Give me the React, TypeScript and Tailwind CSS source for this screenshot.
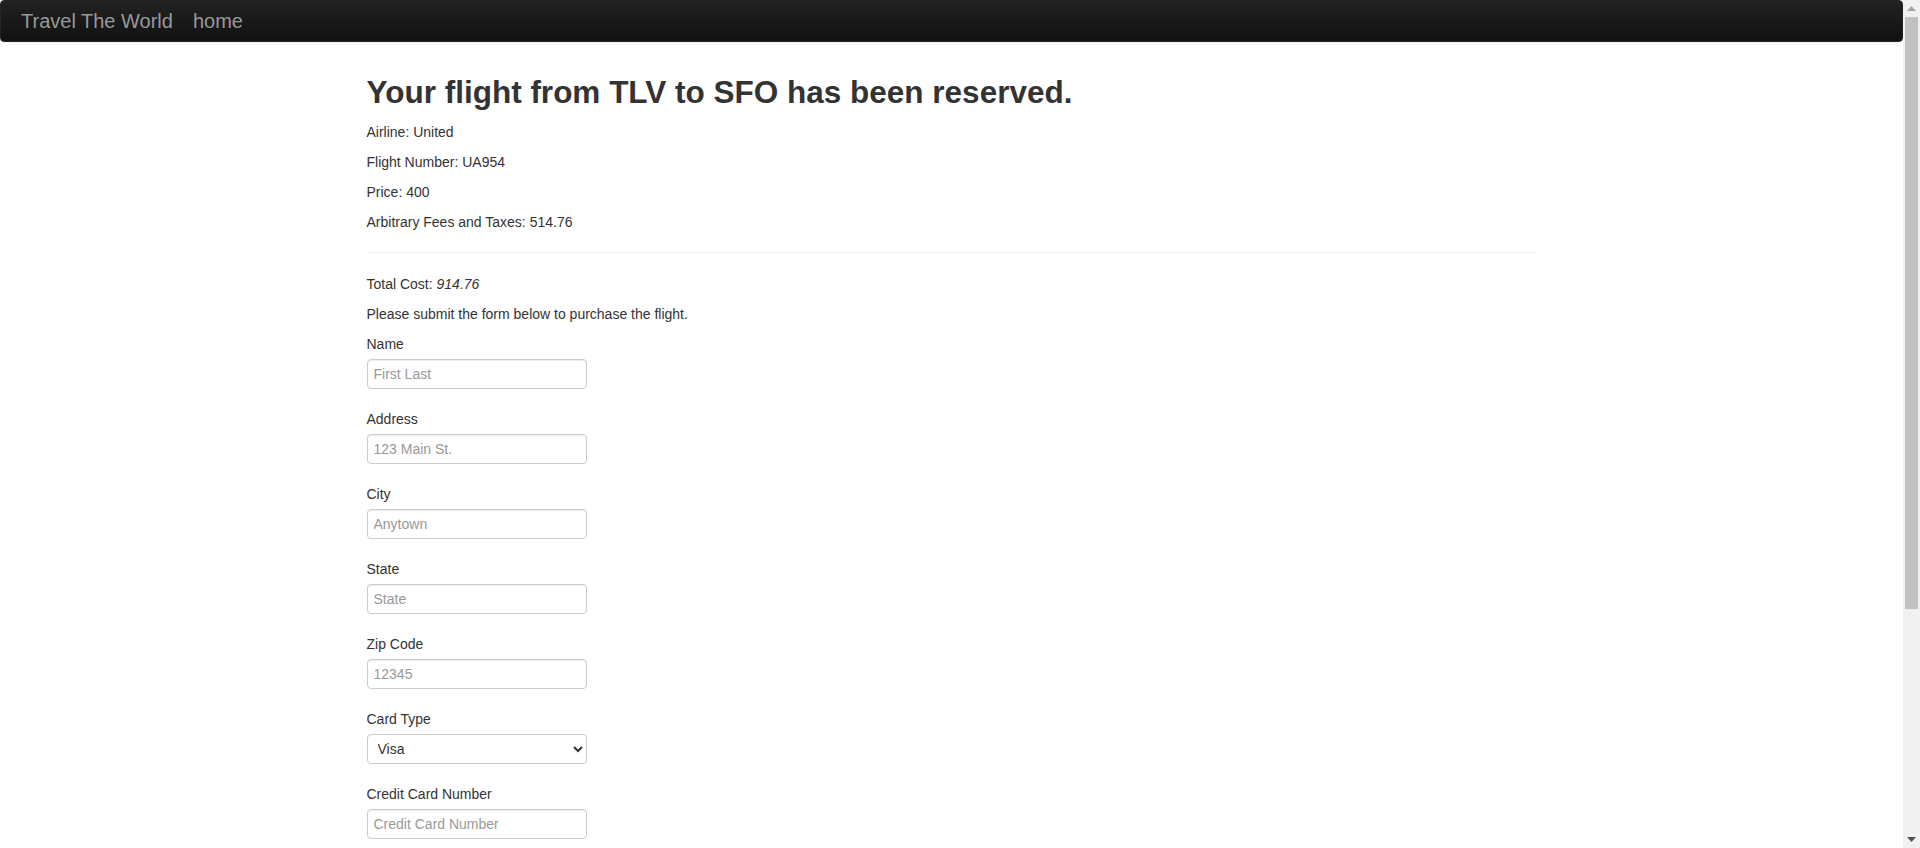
import type { ReactNode } from 'react';

const FONT = 'font-["Liberation_Sans",Arial,Helvetica,sans-serif]';

const INPUT =
  'block h-[30px] w-[220px] rounded border border-[#ccc] bg-white px-[6px] py-1 text-[14px] leading-5 text-[#555] shadow-[inset_0_1px_1px_rgba(0,0,0,0.075)] placeholder:text-[#999] focus:outline-none';

function Group({ label, children }: { label: string; children: ReactNode }) {
  return (
    <div className="mb-5">
      <label className="mb-[5px] block">{label}</label>
      {children}
    </div>
  );
}

function Field({ label, placeholder }: { label: string; placeholder: string }) {
  return (
    <Group label={label}>
      <input type="text" className={INPUT} placeholder={placeholder} />
    </Group>
  );
}

// classic window scrollbar, as the reference shows it
function Scrollbar() {
  return (
    <div className="flex w-[17px] shrink-0 flex-col bg-[#f1f1f1]">
      <div className="flex h-[17px] items-center justify-center">
        <svg width="9" height="5" viewBox="0 0 9 5">
          <path d="M0 5 L4.5 0 L9 5 Z" fill="#a3a3a3" />
        </svg>
      </div>
      <div className="flex-1 px-[2px]">
        <div className="h-[592px] bg-[#c1c1c1]" />
      </div>
      <div className="flex h-[17px] items-center justify-center">
        <svg width="9" height="5" viewBox="0 0 9 5">
          <path d="M0 0 L4.5 5 L9 0 Z" fill="#505050" />
        </svg>
      </div>
    </div>
  );
}

export default function App() {
  return (
    <div className={`${FONT} flex h-[848px] overflow-hidden bg-white text-[14px] leading-5 text-[#333]`}>
      <div className="min-w-0 flex-1">
        <div className="mb-[30px] flex h-[42px] items-center rounded border border-[#252525] bg-gradient-to-b from-[#222] to-[#111] px-5 shadow-[0_1px_4px_rgba(0,0,0,0.065)]">
          <a className="-ml-5 block px-5 py-[10px] text-[20px] leading-5 text-[#999]">Travel The World</a>
          <a className="-ml-5 block px-5 py-[10px] text-[20px] leading-5 text-[#999]">home</a>
        </div>

        <div className="mx-auto w-[1170px]">
          <h2 className="mb-[10px] text-[31.5px] font-bold leading-10 text-[#333]">
            Your flight from TLV to SFO has been reserved.
          </h2>
          <p className="mb-[10px]">Airline: United</p>
          <p className="mb-[10px]">Flight Number: UA954</p>
          <p className="mb-[10px]">Price: 400</p>
          <p className="mb-[10px]">Arbitrary Fees and Taxes: 514.76</p>
          <hr className="my-5 border-t border-b border-t-[#eee] border-b-white" />
          <p className="mb-[10px]">
            Total Cost: <em>914.76</em>
          </p>
          <p className="mb-[10px]">Please submit the form below to purchase the flight.</p>

          <form>
            <Field label="Name" placeholder="First Last" />
            <Field label="Address" placeholder="123 Main St." />
            <Field label="City" placeholder="Anytown" />
            <Field label="State" placeholder="State" />
            <Field label="Zip Code" placeholder="12345" />
            <Group label="Card Type">
              <select
                className="block h-[30px] w-[220px] rounded border border-[#ccc] bg-white px-[6px] text-[14px] text-[#333]"
                defaultValue="visa"
              >
                <option value="visa">Visa</option>
                <option value="amex">American Express</option>
                <option value="dinersclub">Diner's Club</option>
              </select>
            </Group>
            <Field label="Credit Card Number" placeholder="Credit Card Number" />
          </form>
        </div>
      </div>
      <Scrollbar />
    </div>
  );
}
